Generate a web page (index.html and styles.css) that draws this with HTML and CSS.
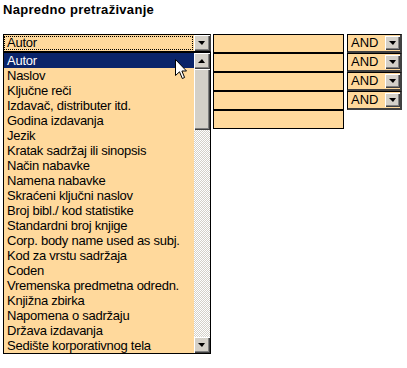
FILE: index.html
```html
<!DOCTYPE html>
<html lang="sr">
<head>
  <meta charset="UTF-8" />
  <title>Napredno pretraživanje</title>
  <link rel="stylesheet" href="styles.css">
</head>
<body>
  <h1 class="title">Napredno pretraživanje</h1>

  <form class="search">
    <div class="field-col">
      <div class="combo">
        <span class="combo-text">Autor</span>
        <span class="btn combo-btn"><i class="arrow-down"></i></span>
      </div>
      <div class="listbox">
        <ul class="options">
          <li class="selected">Autor</li>
          <li>Naslov</li>
          <li>Ključne reči</li>
          <li>Izdavač, distributer itd.</li>
          <li>Godina izdavanja</li>
          <li>Jezik</li>
          <li>Kratak sadržaj ili sinopsis</li>
          <li>Način nabavke</li>
          <li>Namena nabavke</li>
          <li>Skraćeni ključni naslov</li>
          <li>Broj bibl./ kod statistike</li>
          <li>Standardni broj knjige</li>
          <li>Corp. body name used as subj.</li>
          <li>Kod za vrstu sadržaja</li>
          <li>Coden</li>
          <li>Vremenska predmetna odredn.</li>
          <li>Knjižna zbirka</li>
          <li>Napomena o sadržaju</li>
          <li>Država izdavanja</li>
          <li>Sedište korporativnog tela</li>
        </ul>
        <div class="scrollbar">
          <span class="btn sb-btn"><i class="arrow-up"></i></span>
          <span class="btn sb-thumb"></span>
          <span class="sb-track"></span>
          <span class="btn sb-btn"><i class="arrow-down"></i></span>
        </div>
      </div>
      <svg class="cursor" width="13" height="21" viewBox="0 0 13 21">
        <path d="M0.5 0.5 V16.5 L4.5 12.8 L7.3 19.5 L9.6 18.5 L6.9 12 H11.5 Z" fill="#fff" stroke="#000" stroke-width="1" stroke-linejoin="miter" />
      </svg>
    </div>

    <div class="term-col">
      <input class="term" type="text" />
      <input class="term" type="text" />
      <input class="term" type="text" />
      <input class="term" type="text" />
      <input class="term" type="text" />
    </div>

    <div class="op-col">
      <div class="op"><span class="op-text">AND</span><span class="btn op-btn"><i class="arrow-down"></i></span></div>
      <div class="op"><span class="op-text">AND</span><span class="btn op-btn"><i class="arrow-down"></i></span></div>
      <div class="op"><span class="op-text">AND</span><span class="btn op-btn"><i class="arrow-down"></i></span></div>
      <div class="op"><span class="op-text">AND</span><span class="btn op-btn"><i class="arrow-down"></i></span></div>
    </div>
  </form>
</body>
</html>
```

FILE: styles.css
```css
body {
  margin: 0;
  padding: 0 3px;
  background: #fff;
  color: #000;
  font-family: "Liberation Sans", Arial, sans-serif;
  font-size: 13px;
}
.title {
  margin: 0 0 16px;
  padding-top: 2px;
  font-size: 13px;
  line-height: 16px;
  font-weight: bold;
  letter-spacing: 0.3px;
}
.search {
  display: flex;
  align-items: flex-start;
}
.field-col {
  position: relative;
  width: 208px;
  margin-right: 2px;
}
.combo {
  display: flex;
  height: 18px;
  box-sizing: border-box;
  border: 1px solid #000;
  border-right-color: #404040;
  background: #ffd99c;
}
.combo-text {
  flex: 1;
  margin: 1px 1px 1px 0;
  padding-left: 3px;
  line-height: 14px;
  letter-spacing: -0.25px;
  outline: 1px dotted #000;
  outline-offset: -1px;
}
.btn {
  display: block;
  box-sizing: border-box;
  background: #d4d0c8;
  box-shadow: inset 1px 1px #fff, inset -1px -1px #404040, inset -2px -2px #808080;
  position: relative;
}
.combo-btn {
  width: 16px;
}
.arrow-down, .arrow-up {
  position: absolute;
  left: 50%;
  top: 50%;
  width: 0;
  height: 0;
  border-left: 4px solid transparent;
  border-right: 3px solid transparent;
  transform: translate(-4px, -2px);
}
.arrow-down {
  border-top: 4px solid #000;
}
.arrow-up {
  border-bottom: 4px solid #000;
}
.listbox {
  display: flex;
  border: 1px solid #000;
  background: #ffd99c;
}
.options {
  flex: 1;
  margin: 0;
  padding: 0;
  list-style: none;
}
.options li {
  height: 15px;
  line-height: 15px;
  padding-left: 3px;
  letter-spacing: -0.25px;
  white-space: nowrap;
}
.options li.selected {
  background: #0a246a;
  color: #fff;
}
.scrollbar {
  display: flex;
  flex-direction: column;
  width: 16px;
}
.sb-btn {
  height: 16px;
}
.sb-thumb {
  height: 61px;
}
.sb-track {
  flex: 1;
  background-color: #fff;
  background-image: conic-gradient(#d4d0c8 25%, #fff 0 50%, #d4d0c8 0 75%, #fff 0);
  background-size: 2px 2px;
}
.cursor {
  position: absolute;
  left: 172px;
  top: 25px;
}
.term-col {
  display: flex;
  flex-direction: column;
  width: 131px;
  margin-right: 3px;
}
.term {
  height: 19px;
  box-sizing: border-box;
  margin: 0;
  padding: 0 3px;
  border: 1px solid #000;
  background: #ffd99c;
  font: inherit;
}
.op-col {
  display: flex;
  flex-direction: column;
  width: 55px;
}
.op {
  display: flex;
  height: 19px;
  box-sizing: border-box;
  border: 1px solid #000;
  border-right: 2px solid #404040;
  border-bottom: 2px solid #404040;
  background: #ffd99c;
}
.op-text {
  flex: 1;
  padding-left: 3px;
  line-height: 16px;
}
.op-btn {
  width: 15px;
  margin: 1px 0;
}
```
